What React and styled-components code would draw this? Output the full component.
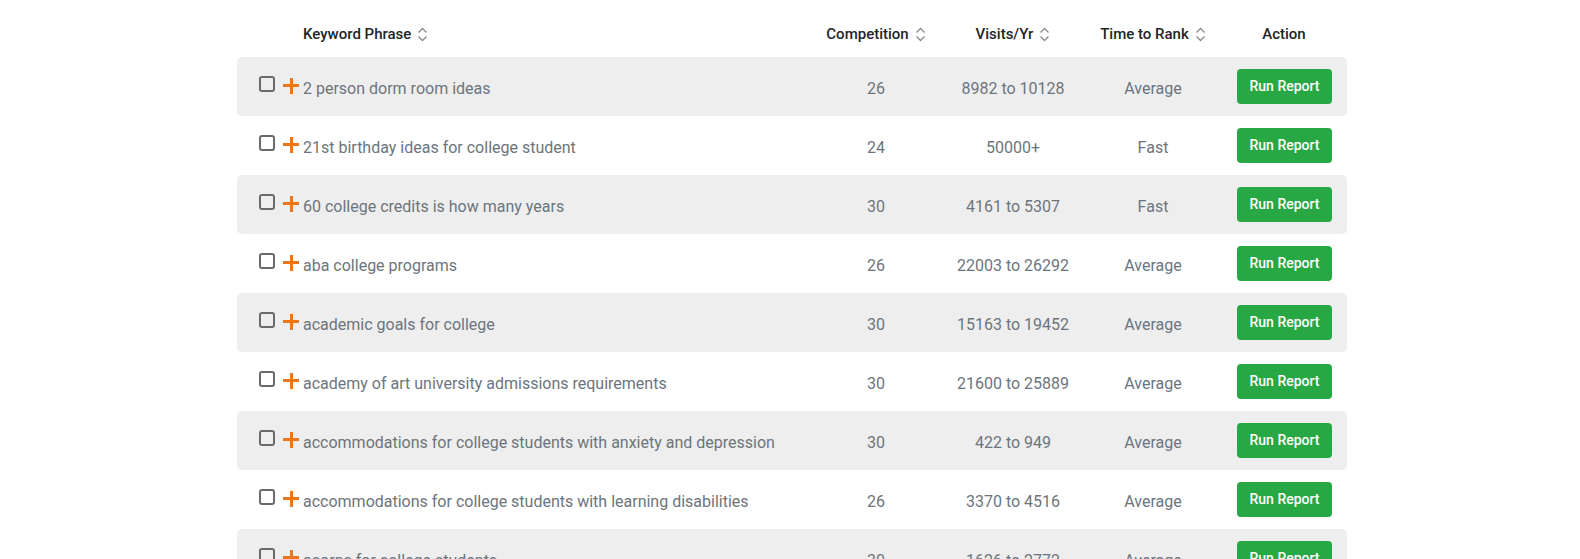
import React from 'react';
import styled, { createGlobalStyle } from 'styled-components';

const rows = [
  ['2 person dorm room ideas', 26, '8982 to 10128', 'Average'],
  ['21st birthday ideas for college student', 24, '50000+', 'Fast'],
  ['60 college credits is how many years', 30, '4161 to 5307', 'Fast'],
  ['aba college programs', 26, '22003 to 26292', 'Average'],
  ['academic goals for college', 30, '15163 to 19452', 'Average'],
  ['academy of art university admissions requirements', 30, '21600 to 25889', 'Average'],
  ['accommodations for college students with anxiety and depression', 30, '422 to 949', 'Average'],
  ['accommodations for college students with learning disabilities', 26, '3370 to 4516', 'Average'],
  ['acorns for college students', 30, '1626 to 2772', 'Average'],
];

const Global = createGlobalStyle`
  body {
    margin: 0;
    background: #fff;
    font-family: Roboto, "Liberation Sans", sans-serif;
    overflow: hidden;
  }
`;

const Table = styled.div`
  width: 1110px;
  margin-left: calc(50% - 553px);
`;

const cols = '574px 130px 144px 136px 126px';

const HeadRow = styled.div`
  display: grid;
  grid-template-columns: ${cols};
  height: 46px;
  margin-top: 11px;
  align-items: center;
`;

const HeadCell = styled.div`
  display: flex;
  align-items: center;
  justify-content: ${(p) => (p.$left ? 'flex-start' : 'center')};
  padding-left: ${(p) => (p.$left ? '66px' : '0')};
  gap: 6px;
  font-size: 15px;
  font-weight: 500;
  color: #212529;
`;

const Row = styled.div`
  display: grid;
  grid-template-columns: ${cols};
  height: 59px;
  align-items: center;
  border-radius: 5px;
  background: ${(p) => (p.$shade ? '#eeeeee' : '#fff')};
  font-size: 16px;
  color: #6c757d;
`;

const KeyCell = styled.div`
  display: flex;
  align-items: center;
  padding-left: 22px;
  white-space: nowrap;
`;

const Phrase = styled.span`
  padding-top: 4px;
`;

const Box = styled.span`
  width: 12px;
  height: 12px;
  border: 2px solid #6a6a6a;
  border-radius: 3px;
  margin-top: -5px;
  margin-right: 8px;
`;

const Plus = styled.span`
  position: relative;
  width: 16px;
  height: 16px;
  margin-top: -2px;
  margin-right: 4px;
  &::before,
  &::after {
    content: '';
    position: absolute;
    background: #e87722;
  }
  &::before {
    left: 0;
    right: 0;
    top: 6.5px;
    height: 3px;
  }
  &::after {
    top: 0;
    bottom: 0;
    left: 6.5px;
    width: 3px;
  }
`;

const Cell = styled.div`
  text-align: center;
  padding-top: 4px;
`;

const ActionCell = styled.div`
  display: flex;
  justify-content: flex-end;
  padding-right: 15px;
`;

const Button = styled.button`
  width: 95px;
  height: 35px;
  border: 0;
  border-radius: 4px;
  background: #28a745;
  color: #fff;
  font-family: Roboto, "Liberation Sans", sans-serif;
  font-size: 14px;
  font-weight: 500;
  padding: 0 0 1px;
  cursor: pointer;
`;

const Sort = () => (
  <svg width="11" height="15" viewBox="0 0 11 15" fill="none" stroke="#8a8a8a" strokeWidth="1.3">
    <path d="M1.5 5.5 L5.5 1.5 L9.5 5.5" />
    <path d="M1.5 9.5 L5.5 13.5 L9.5 9.5" />
  </svg>
);

export default function App() {
  return (
    <>
      <Global />
      <Table>
        <HeadRow>
          <HeadCell $left>
            Keyword Phrase <Sort />
          </HeadCell>
          <HeadCell>
            Competition <Sort />
          </HeadCell>
          <HeadCell>
            Visits/Yr <Sort />
          </HeadCell>
          <HeadCell>
            Time to Rank <Sort />
          </HeadCell>
          <HeadCell>Action</HeadCell>
        </HeadRow>
        {rows.map(([kw, comp, visits, time], i) => (
          <Row key={kw} $shade={i % 2 === 0}>
            <KeyCell>
              <Box />
              <Plus />
              <Phrase>{kw}</Phrase>
            </KeyCell>
            <Cell>{comp}</Cell>
            <Cell>{visits}</Cell>
            <Cell>{time}</Cell>
            <ActionCell>
              <Button>Run Report</Button>
            </ActionCell>
          </Row>
        ))}
      </Table>
    </>
  );
}
